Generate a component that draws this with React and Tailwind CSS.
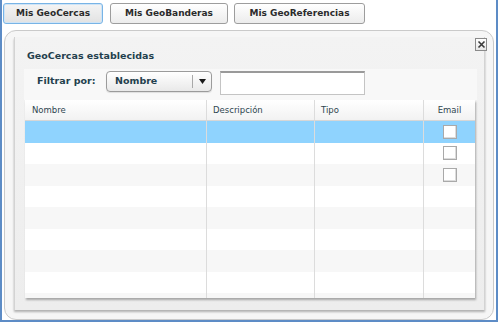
import React from "react";

const font = { fontFamily: '"DejaVu Sans", Verdana, sans-serif' };

function Tab({ label, active, w }) {
  return (
    <div
      className={
        "h-[21px] flex items-center justify-center rounded-[3px] border text-[9px] font-bold text-[#2b2b2b] " +
        (active
          ? "border-[#78b4e6] bg-gradient-to-b from-[#f4f4f4] to-[#e2e2e2] shadow-[inset_0_0_0_1px_#cfe4f6]"
          : "border-[#9d9d9d] bg-gradient-to-b from-white to-[#ececec]")
      }
      style={{ width: w }}
    >
      {label}
    </div>
  );
}

function Checkbox() {
  return (
    <div className="w-[14px] h-[14px] bg-white border border-[#a9a9a9] shadow-[inset_-1px_-1px_0_#dcdcdc]" />
  );
}

function Row({ bg, checkbox }) {
  return (
    <div className={"flex h-[21.5px] shrink-0 " + bg}>
      <div className="w-[182px] border-r border-[#dcdcdc]" />
      <div className="w-[108px] border-r border-[#dcdcdc]" />
      <div className="w-[109px] border-r border-[#dcdcdc]" />
      <div className="w-[51px] flex items-center justify-center">
        {checkbox && <Checkbox />}
      </div>
    </div>
  );
}

export default function App() {
  const rows = [
    { bg: "bg-[#8fd3fe]", cb: true },
    { bg: "bg-white", cb: true },
    { bg: "bg-[#f7f7f7]", cb: true },
    { bg: "bg-white" },
    { bg: "bg-[#f7f7f7]" },
    { bg: "bg-white" },
    { bg: "bg-[#f7f7f7]" },
    { bg: "bg-white" },
    { bg: "bg-[#f7f7f7]" },
  ];
  return (
    <div
      className="w-[498px] h-[322px] bg-white border-l-2 border-r-2 border-b-2 border-[#5d8cc6] flex flex-col overflow-hidden"
      style={font}
    >
      <div className="flex pt-[3px] pl-[1px]">
        <Tab label="Mis GeoCercas" active w={100} />
        <div className="w-[7px]" />
        <Tab label="Mis GeoBanderas" w={118} />
        <div className="w-[6px]" />
        <Tab label="Mis GeoReferencias" w={131} />
      </div>

      <div className="relative mt-[6px] ml-[2px] w-[490px] h-[290px] rounded-[12px] border border-[#cacaca] bg-[#f6f6f6] flex flex-col">
        <div className="absolute right-[6px] top-[7px] w-[12px] h-[13px] border border-[#8a8a8a] bg-gradient-to-b from-white to-[#e6e6e6] flex items-center justify-center">
          <svg width="9" height="9" viewBox="0 0 9 9">
            <path d="M1.5 1.5 L7.5 7.5 M7.5 1.5 L1.5 7.5" stroke="#3a3a3a" strokeWidth="1.6" />
          </svg>
        </div>

        <div className="mt-[6px] ml-[9px] w-[471px] h-[273px] border-l border-r border-[#d3d3d3] bg-gradient-to-b from-[#f3f3f3] to-[#ededed] shadow-[0_2px_2px_rgba(0,0,0,0.28)] flex flex-col">
          <div className="pt-[13px] pl-[12px] h-[25px] text-[9.5px] leading-[12px] font-bold text-[#23404d]">
            GeoCercas establecidas
          </div>
          <div className="mt-[7px] ml-[9px] w-[453px] flex flex-col">
            <div className="h-[31px] bg-[#f8f8f8] flex items-start pt-[2px]">
              <div className="w-[82px] h-[21px] flex items-center pl-[13px] text-[9.5px] font-bold text-[#23404d]">
                Filtrar por:
              </div>
              <div className="w-[106px] h-[21px] rounded-[4px] border border-[#9b9b9b] bg-gradient-to-b from-white to-[#e9e9e9] flex items-center shadow-[0_1px_1px_rgba(0,0,0,0.1)]">
                <div className="flex-1 pl-[8px] text-[9.5px] font-bold text-[#23404d]">Nombre</div>
                <div className="w-px h-[13px] bg-[#a8a8a8]" />
                <div className="w-[18px] flex items-center justify-center">
                  <svg width="7" height="5" viewBox="0 0 7 5">
                    <path d="M0 0 L7 0 L3.5 5 Z" fill="#1a1a1a" />
                  </svg>
                </div>
              </div>
              <div className="ml-[8px] w-[145px] h-[24px] bg-white border border-[#c4c4c4] border-t-2 border-t-[#9a9a9a]" />
            </div>
            <div className="ml-px w-[450px] h-[198px] bg-white overflow-hidden flex flex-col shadow-[1px_2px_2px_rgba(0,0,0,0.3)]">
              <div className="flex h-[21px] shrink-0 bg-gradient-to-b from-white to-[#f2f2f2] border-b border-[#d6d6d6] text-[8.5px] text-[#2f4650]">
                <div className="w-[182px] border-r border-[#dcdcdc] flex items-center pl-[7px]">Nombre</div>
                <div className="w-[108px] border-r border-[#dcdcdc] flex items-center pl-[6px]">Descripción</div>
                <div className="w-[109px] border-r border-[#dcdcdc] flex items-center pl-[6px]">Tipo</div>
                <div className="w-[51px] flex items-center justify-center">Email</div>
              </div>
              {rows.map((r, i) => (
                <Row key={i} bg={r.bg} checkbox={r.cb} />
              ))}
            </div>
          </div>
        </div>
      </div>
    </div>
  );
}
